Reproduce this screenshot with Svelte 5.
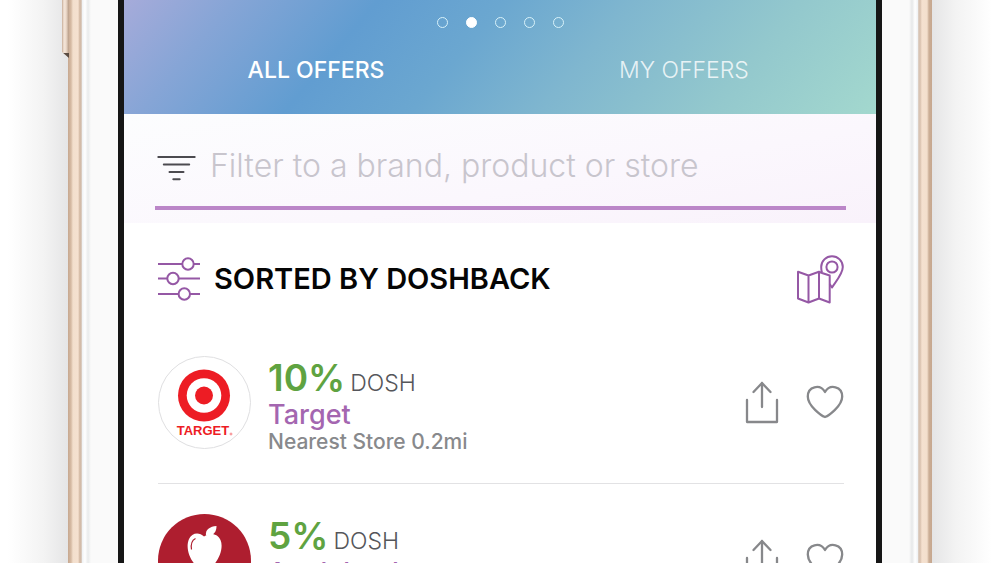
<script lang="ts">
	type Offer = {
		id: string;
		percent: number;
		brand: string;
		distance: string;
		liked: boolean;
	};

	const tabs = ["All Offers", "My Offers"];
	const slides = [0, 1, 2, 3, 4];

	let activeTab = $state(0);
	let activeSlide = $state(1);
	let query = $state("");
	let offers = $state<Offer[]>([
		{
			id: "target",
			percent: 10,
			brand: "Target",
			distance: "0.2mi",
			liked: false,
		},
		{
			id: "applebees",
			percent: 5,
			brand: "Applebee's",
			distance: "0.4mi",
			liked: false,
		},
	]);

	let visible = $derived(
		offers.filter((o) =>
			o.brand.toLowerCase().includes(query.trim().toLowerCase()),
		),
	);
</script>

<div class="stage">
	<div class="side-button"></div>
	<div class="phone">
		<div class="bezel">
			<main class="screen">
				<header class="hero">
					<div class="dots">
						{#each slides as slide}
							<button
								type="button"
								class="dot"
								class:on={slide === activeSlide}
								aria-label="Slide {slide + 1}"
								onclick={() => (activeSlide = slide)}
							></button>
						{/each}
					</div>
					<nav class="tabs">
						{#each tabs as tab, i}
							<button
								type="button"
								class="tab"
								class:active={i === activeTab}
								onclick={() => (activeTab = i)}>{tab}</button
							>
						{/each}
					</nav>
				</header>

				<section class="filter">
					<label class="field">
						<svg class="funnel" viewBox="0 0 42 32" aria-hidden="true">
							<path d="M3.300 7H39.700M8.800 14.500H34.200M14.500 22H28.500M18.300 29.300H24.700" />
						</svg>
						<input
							type="text"
							aria-label="Filter offers"
							placeholder="Filter to a brand, product or store"
							bind:value={query}
						/>
					</label>
				</section>

				<section class="sort">
					<button type="button" class="sort-by">
						<svg class="sliders" viewBox="0 0 42 44" aria-hidden="true">
							<path
								d="M0 7H24.300M35.700 7H42M0 21.500H9.300M20.700 21.500H42M0 37H20.600M32 37H42"
							/>
							<circle cx="30" cy="7" r="5.7" />
							<circle cx="15" cy="21.500" r="5.7" />
							<circle cx="26.300" cy="37" r="5.7" />
						</svg>
						<span>Sorted by Doshback</span>
					</button>
					<button type="button" class="map" aria-label="Map">
						<svg viewBox="0 0 50 50" aria-hidden="true">
							<path
								d="M26 19L23 17.800L12.500 21.500L2 17.800V44.500L12.500 48.500L23 44.500L33.700 48.500V21.500L26 19M12.500 21.500V48.500M23 17.800V44.500"
							/>
							<path
								d="M26 18.500C25.300 16.500 25.200 15 25.200 13A10.800 10.800 0 0 1 46.800 13C46.800 20 39 28.500 36 33.500L33.700 30"
							/>
							<circle cx="36" cy="13" r="5.600" />
						</svg>
					</button>
				</section>

				<ul class="offers">
					{#each visible as offer (offer.id)}
						<li class="offer">
							{#if offer.id === "target"}
								<svg class="logo" viewBox="0 0 93 93" aria-hidden="true">
									<circle
										cx="46.5"
										cy="46.5"
										r="46"
										fill="#fff"
										stroke="#dfdfe1"
									/>
									<circle cx="46" cy="39.5" r="26" fill="#ed1c24" />
									<circle cx="46" cy="39.5" r="17.300" fill="#fff" />
									<circle cx="46" cy="39.5" r="9" fill="#ed1c24" />
									<text class="logo-text" x="45" y="79">TARGET</text>
									<circle
										cx="73"
										cy="78"
										r="1"
										fill="none"
										stroke="#ed1c24"
										stroke-width=".5"
									/>
								</svg>
							{:else}
								<svg class="logo" viewBox="0 0 93 93" aria-hidden="true">
									<circle cx="46.5" cy="46.5" r="46.5" fill="#ae1e2f" />
									<path
										d="M46 22.500C41 17.500 33.500 19 31 25C27.500 33 31 44 37 50.500C41 54.500 43 52 46.500 52C50 52 52 54.500 56 50.500C62 44 65.500 33 62.500 26C60 19.500 52 18 46 22.500Z"
										fill="#fff"
									/>
									<path
										d="M48 21.500C47 15.500 52 12.500 58.500 12C58.500 18 55.500 22.500 48 21.500Z"
										fill="#fff"
									/>
									<path
										d="M37.500 24.500C33.500 26.500 32.700 30.500 33.500 35.500"
										fill="none"
										stroke="#ae1e2f"
										stroke-width="1.200"
									/>
								</svg>
							{/if}
							<div class="details">
								<p class="rate">
									<strong>{offer.percent}%</strong><span>DOSH</span>
								</p>
								<h2>{offer.brand}</h2>
								<p class="near">Nearest Store {offer.distance}</p>
							</div>
							<div class="actions">
								<button type="button" aria-label="Share {offer.brand}">
									<svg
										class="share"
										viewBox="0 0 34 44"
										aria-hidden="true"
									>
										<path
											d="M2 20V42H32V20M17 27V3M8.500 12L17 3L25.500 12"
										/>
									</svg>
								</button>
								<button
									type="button"
									aria-label="Like {offer.brand}"
									aria-pressed={offer.liked}
									onclick={() => (offer.liked = !offer.liked)}
								>
									<svg
										class="heart"
										class:liked={offer.liked}
										viewBox="0 0 38 34"
										aria-hidden="true"
									>
										<path
											d="M19 32C15.500 30.800 1.800 21 1.800 11.500C1.800 1.500 14 -1.500 19 7C24 -1.500 36.200 1.500 36.200 11.500C36.200 21 22.500 30.800 19 32Z"
										/>
									</svg>
								</button>
							</div>
						</li>
					{/each}
				</ul>
			</main>
		</div>
	</div>
</div>

<style>
	:global(body) {
		background: #fff;
		font-family: Inter, "Open Sans", sans-serif;
	}

	button {
		padding: 0;
		border: 0;
		background: none;
		color: inherit;
		font: inherit;
		cursor: pointer;
	}

	svg {
		display: block;
		flex: none;
	}

	.stage {
		position: relative;
		height: 100vh;
		overflow: hidden;
		padding: 0 68px;
		background:
			linear-gradient(to left, #e5e5e6, #f3f3f3 24px, #fff 60px) left / 68px
				100% no-repeat,
			linear-gradient(to right, #e5e5e6, #f3f3f3 24px, #fff 60px) right / 68px
				100% no-repeat;
	}

	.side-button {
		position: absolute;
		top: 0;
		left: 62px;
		width: 7px;
		height: 58px;
		background:
			linear-gradient(#5a4c42, #5a4c42) bottom / 100% 5px no-repeat,
			linear-gradient(to right, #c7ad98, #f4e5d8 2px, #eedccd 4px, #b79b84);
		clip-path: polygon(0 0, 100% 0, 100% 100%, 0 52px);
	}

	.phone {
		height: 100%;
		box-sizing: border-box;
		padding: 0 14px;
		background:
			linear-gradient(
					to right,
					#c6a78f,
					#d6bba4 3px,
					#f3dfcd 5px,
					#f5e1d0 10px,
					#cfb49e 12px,
					#ddd3cb
				)
				left / 14px 100% no-repeat,
			linear-gradient(
					to left,
					#c6a78f,
					#cbae96 3px,
					#f3dfcd 5px,
					#f5e1d0 10px,
					#d7bfac 12px,
					#ddd3cb
				)
				right / 14px 100% no-repeat;
	}

	.bezel {
		height: 100%;
		box-sizing: border-box;
		padding: 0 36px;
		background: linear-gradient(
			to right,
			#eef1f4,
			#fff 3px,
			#e9ebec 6px,
			#fafafa 9px,
			#fafafa calc(100% - 9px),
			#e6e8e9 calc(100% - 6px),
			#fff calc(100% - 3px),
			#eef1f4
		);
	}

	.screen {
		height: 100%;
		box-sizing: border-box;
		overflow: hidden;
		border: solid #161616;
		border-width: 0 6px;
		background: #fff;
	}

	.hero {
		height: 114px;
		background: linear-gradient(
			130deg,
			#a6abda 0%,
			#86a5d6 13%,
			#619dd1 30%,
			#6ba7d0 45%,
			#7fb6cf 60%,
			#93c8cd 80%,
			#a3d8ce 100%
		);
		color: #fff;
	}

	.dots {
		display: flex;
		justify-content: center;
		gap: 18px;
		padding-top: 17px;
	}

	.dot {
		width: 11px;
		height: 11px;
		box-sizing: border-box;
		border: 1px solid #d8f2fa;
		border-radius: 50%;
	}

	.dot.on {
		background: #fff;
		border-color: #fff;
	}

	.tabs {
		display: grid;
		grid-template-columns: 1fr 1fr;
		padding: 28px 8px 0;
	}

	.tab {
		font-size: 23px;
		line-height: 28px;
		font-weight: 300;
		text-transform: uppercase;
		opacity: 0.8;
	}

	.tab.active {
		font-weight: 500;
		opacity: 1;
	}

	.filter {
		padding: 12px 30px 13px 31px;
		background: linear-gradient(170deg, #fcfdfe, #fbf7fd 60%, #f9f2fb);
	}

	.field {
		display: flex;
		align-items: center;
		gap: 13px;
		height: 80px;
		border-bottom: 4px solid #bb86c8;
	}

	.funnel {
		width: 42px;
		height: 32px;
		fill: none;
		stroke: #4c4b50;
		stroke-width: 2;
		stroke-linecap: round;
	}

	input {
		flex: 1;
		min-width: 0;
		padding: 0;
		border: 0;
		outline: 0;
		background: none;
		color: #555;
		font: 300 32px/40px Inter, "Open Sans", sans-serif;
	}

	input::placeholder {
		color: #c8c5cd;
		opacity: 1;
	}

	.sort {
		display: flex;
		justify-content: space-between;
		align-items: center;
		height: 103px;
		box-sizing: border-box;
		padding: 8px 30px 0 34px;
	}

	.sort-by {
		display: flex;
		align-items: center;
		gap: 14px;
		color: #050505;
		font-size: 29px;
		line-height: 34px;
		font-weight: 600;
		text-transform: uppercase;
	}

	.sliders {
		width: 42px;
		height: 44px;
	}

	.map svg {
		width: 50px;
		height: 50px;
	}

	.sliders,
	.map svg {
		fill: none;
		stroke: #9558a5;
		stroke-width: 2;
		stroke-linejoin: round;
	}

	.offers {
		margin: 0;
		padding: 0 32px 0 34px;
		list-style: none;
	}

	.offer {
		display: flex;
		align-items: center;
		padding: 24px 0 29px;
		border-bottom: 1px solid #e2e2e4;
	}

	.logo {
		width: 93px;
		height: 93px;
	}

	.logo-text {
		fill: #ed1c24;
		font: bold 13px "Liberation Sans", Arial, sans-serif;
		text-anchor: middle;
	}

	.details {
		flex: 1;
		min-width: 0;
		padding: 6px 0 0 17px;
	}

	.rate {
		display: flex;
		align-items: baseline;
		gap: 5px;
		margin: 0;
		color: #55565a;
		font-size: 23px;
		line-height: 30px;
		font-weight: 300;
	}

	.rate strong {
		color: #5fa341;
		font-size: 37px;
		line-height: 44px;
		font-weight: 600;
	}

	h2 {
		margin: 0;
		color: #a466b0;
		font-size: 27px;
		line-height: 30px;
		font-weight: 500;
	}

	.near {
		margin: 0;
		color: #88898c;
		font-size: 21px;
		line-height: 24px;
		font-weight: 500;
	}

	.actions {
		display: flex;
		align-items: center;
		gap: 27px;
	}

	.actions svg {
		fill: none;
		stroke: #87888b;
		stroke-width: 2.3;
		stroke-linecap: round;
		stroke-linejoin: round;
	}

	.share {
		width: 34px;
		height: 44px;
	}

	.heart {
		width: 38px;
		height: 34px;
	}

	.actions .heart.liked {
		fill: #bb86c8;
	}
</style>
